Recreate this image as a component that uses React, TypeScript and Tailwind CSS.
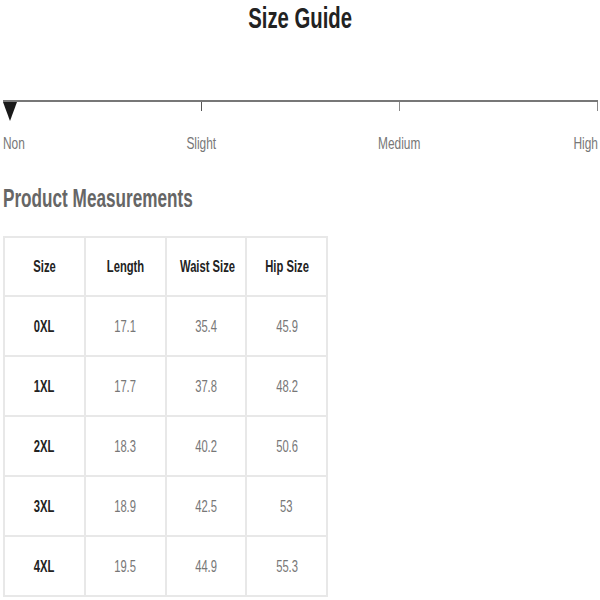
import React from "react";

const rows = [
  ["0XL", "17.1", "35.4", "45.9"],
  ["1XL", "17.7", "37.8", "48.2"],
  ["2XL", "18.3", "40.2", "50.6"],
  ["3XL", "18.9", "42.5", "53"],
  ["4XL", "19.5", "44.9", "55.3"],
];

const labels = ["Non", "Slight", "Medium", "High"];

// squeezed text, the picture's type is condensed
function Sq({ children, origin = "origin-center", className = "scale-x-[0.7]" }: { children: React.ReactNode; origin?: string; className?: string }) {
  return <span className={`inline-block whitespace-nowrap ${origin} ${className}`}>{children}</span>;
}

export default function App() {
  return (
    <div className="w-[600px] h-[600px] bg-white overflow-hidden" style={{ fontFamily: '"Liberation Sans", Arial, sans-serif' }}>
      <h1 className="pt-[1px] text-center text-[29px] leading-[34px] font-bold text-[#222]">
        <Sq>Size Guide</Sq>
      </h1>

      {/* scale */}
      <div className="mt-[65px] ml-[3px] mr-[2px]">
        <div className="relative h-[2px] bg-[#777]">
          <div className="absolute left-0 top-[2px] w-0 h-0 border-l-[7px] border-r-[7px] border-t-[19px] border-l-transparent border-r-transparent border-t-[#1a1a1a]" />
        </div>
        <div className="flex justify-between h-[9px]">
          <div className="w-px" />
          <div className="w-px bg-[#555]" />
          <div className="w-px bg-[#888]" />
          <div className="w-px bg-[#888]" />
        </div>
        <div className="flex justify-between mt-[23px] text-[17px] leading-[20px] text-[#777]">
          {labels.map((l, i) => (
            <div key={l} className={`w-0 flex ${i === 0 ? "justify-start" : i === 3 ? "justify-end" : "justify-center"}`}>
              <Sq origin={i === 0 ? "origin-left" : i === 3 ? "origin-right" : "origin-center"}>{l}</Sq>
            </div>
          ))}
        </div>
      </div>

      <h2 className="mt-[29px] ml-[3px] text-[26px] leading-[30px] font-bold text-[#666]">
        <Sq origin="origin-left" className="scale-x-[0.66]">Product Measurements</Sq>
      </h2>

      <table className="mt-[23px] ml-[3px] w-[325px] border-collapse table-fixed text-[16.5px]">
        <thead>
          <tr className="h-[59px]">
            {["Size", "Length", "Waist Size", "Hip Size"].map((h) => (
              <th key={h} className="border-2 border-[#e8e8e8] text-center font-bold text-[#222] p-0">
                <Sq className="scale-x-[0.68]">{h}</Sq>
              </th>
            ))}
          </tr>
        </thead>
        <tbody>
          {rows.map((r) => (
            <tr key={r[0]} className="h-[60px]">
              {r.map((c, j) => (
                <td key={j} className={`border-2 border-[#e8e8e8] text-center p-0 ${j === 0 ? "font-bold text-[#222]" : "text-[#777]"}`}>
                  <Sq className="scale-x-[0.68]">{c}</Sq>
                </td>
              ))}
            </tr>
          ))}
        </tbody>
      </table>
    </div>
  );
}
